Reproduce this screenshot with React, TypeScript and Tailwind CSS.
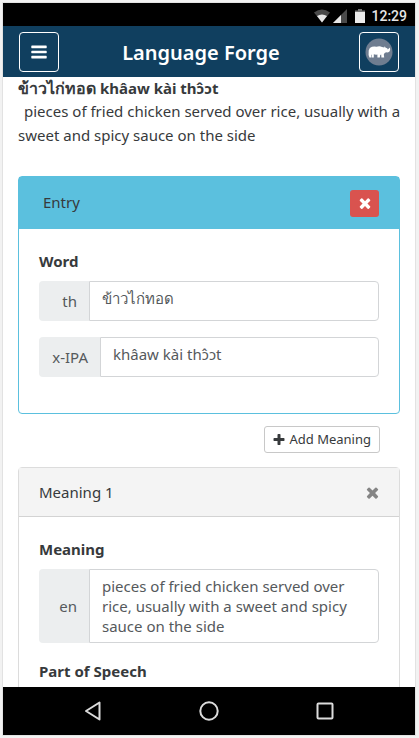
import type { ReactNode } from "react";

const ICONS = {
  bars: "M1664 1344v128q0 26-19 45t-45 19h-1408q-26 0-45-19t-19-45v-128q0-26 19-45t45-19h1408q26 0 45 19t19 45zm0-512v128q0 26-19 45t-45 19h-1408q-26 0-45-19t-19-45v-128q0-26 19-45t45-19h1408q26 0 45 19t19 45zm0-512v128q0 26-19 45t-45 19h-1408q-26 0-45-19t-19-45v-128q0-26 19-45t45-19h1408q26 0 45 19t19 45z",
  times: "M1490 1322q0 40-28 68l-136 136q-28 28-68 28t-68-28l-294-294-294 294q-28 28-68 28t-68-28l-136-136q-28-28-28-68t28-68l294-294-294-294q-28-28-28-68t28-68l136-136q28-28 68-28t68 28l294 294 294-294q28-28 68-28t68 28l136 136q28 28 28 68t-28 68l-294 294 294 294q28 28 28 68z",
  plus: "M1600 736v192q0 40-28 68t-68 28h-416v416q0 40-28 68t-68 28h-192q-40 0-68-28t-28-68v-416h-416q-40 0-68-28t-28-68v-192q0-40 28-68t68-28h416v-416q0-40 28-68t68-28h192q40 0 68 28t28 68v416h416q40 0 68 28t28 68z",
};

function Icon({ name, size }: { name: keyof typeof ICONS; size: number }) {
  return (
    <svg width={size} height={size} viewBox="0 0 1792 1792" fill="currentColor" aria-hidden="true">
      <path d={ICONS[name]} />
    </svg>
  );
}

function StatusBar() {
  return (
    <div className="flex h-[23px] shrink-0 items-center justify-end bg-black pt-0.5 pr-2 text-[#e6e6e6]">
      <svg width="18" height="14" viewBox="0 0 18 14" aria-hidden="true">
        <path d="M1 3.5Q9-2.5 17 3.5L9 13.5Z" fill="#4a4a4a" />
        <path d="M4 7Q9 3.8 14 7L9 13.5Z" fill="#e8e8e8" />
      </svg>
      <svg className="ml-0.5" width="14" height="14" viewBox="0 0 14 14" aria-hidden="true">
        <path d="M14 0V14H0Z" fill="#4a4a4a" />
        <path d="M8 6V14H0Z" fill="#e8e8e8" />
      </svg>
      <svg className="ml-2" width="10" height="14" viewBox="0 0 10 14" aria-hidden="true">
        <path d="M3 0H7V1.5H10V3H0V1.5H3Z" fill="#777" />
        <path d="M0 3H10V14H0Z" fill="#ececec" />
      </svg>
      <span className="ml-1.5 font-[Roboto,sans-serif] text-sm font-medium">12:29</span>
    </div>
  );
}

function Rhino() {
  return (
    <svg width="28" height="28" viewBox="0 0 28 28" aria-hidden="true">
      <circle cx="14" cy="14" r="13.5" fill="#6f7d90" />
      <path
        d="M4.2 18.800L3.600 17L3.700 12.500Q4.300 9.600 7 8.800Q9.500 8.200 11.500 8.800Q14.500 7.900 17 8.900L19.200 9.400L19.800 8.200L20.600 9.700L22.200 10.200L22.800 11.400L25 9.600Q25.600 12 24.300 13.700Q23 14.700 21.200 14.300Q19.300 14.800 18.800 16.500L19.200 19.600H16.400L16.200 16.500L15.200 16.900L14.800 19.600H12.400L12.400 16.600Q10.500 17 8.800 16.300L8.800 19.600H6.800L6.600 17L6 16.400L6.300 19.600H4.400Z"
        fill="#fff"
      />
    </svg>
  );
}

function Navbar() {
  return (
    <header className="flex h-[51px] shrink-0 items-center justify-between bg-[#103f5f] px-4 text-white">
      <button
        type="button"
        aria-label="Menu"
        className="flex size-10 items-center justify-center rounded border border-white"
      >
        <Icon name="bars" size={18} />
      </button>
      <h1 className="pt-0.5 pr-4 text-xl font-semibold">Language Forge</h1>
      <button
        type="button"
        aria-label="Account"
        className="flex size-10 items-center justify-center rounded border border-white"
      >
        <Rhino />
      </button>
    </header>
  );
}

function Field({ id, tag, value, rows = 1, wide = false }: {
  id: string;
  tag: string;
  value: string;
  rows?: number;
  wide?: boolean;
}) {
  return (
    <div className="flex">
      <label
        htmlFor={id}
        className={`flex shrink-0 items-center justify-end rounded-l bg-[#eceeef] pr-3 text-[#55595c] ${wide ? "w-[61px]" : "w-[50px]"}`}
      >
        {tag}
      </label>
      <textarea
        id={id}
        rows={rows}
        defaultValue={value}
        className={`block min-w-0 flex-1 resize-none overflow-hidden rounded-r border border-[#d3d5d7] bg-white px-3 py-1.5 leading-5 text-[#55595c] outline-none ${rows > 1 ? "" : "h-10"}`}
      />
    </div>
  );
}

function FieldLabel({ children }: { children: ReactNode }) {
  return <h2 className="leading-6 font-bold">{children}</h2>;
}

function EntryCard() {
  return (
    <section className="mt-[29px] rounded border border-[#5bc0de] pb-9">
      <div className="flex h-[52px] items-center justify-between bg-[#5bc0de] pr-5 pl-6">
        <span className="pb-0.5">Entry</span>
        <button
          type="button"
          aria-label="Close entry"
          className="flex h-[27px] w-[29px] items-center justify-center rounded-[3px] bg-[#d9534f] text-white"
        >
          <Icon name="times" size={16} />
        </button>
      </div>
      <div className="px-5 pt-5">
        <FieldLabel>Word</FieldLabel>
        <div className="mt-2 flex flex-col gap-4">
          <Field id="word-th" tag="th" value="ข้าวไก่ทอด" />
          <Field id="word-ipa" tag="x-IPA" value="khâaw kài thɔ̂ɔt" wide />
        </div>
      </div>
    </section>
  );
}

function MeaningCard() {
  return (
    <section className="mt-3.5 rounded border border-[#dcdcdc]">
      <div className="flex h-[49px] items-center justify-between border-b border-[#d3d3d3] bg-[#f4f4f4] pr-[18px] pl-5">
        <span>Meaning 1</span>
        <button type="button" aria-label="Remove meaning" className="text-[#858585]">
          <Icon name="times" size={17} />
        </button>
      </div>
      <div className="px-5 pt-5 pb-5">
        <FieldLabel>Meaning</FieldLabel>
        <div className="mt-2">
          <Field
            id="meaning-en"
            tag="en"
            rows={3}
            value="pieces of fried chicken served over rice, usually with a sweet and spicy sauce on the side"
          />
        </div>
        <div className="mt-4">
          <FieldLabel>Part of Speech</FieldLabel>
        </div>
      </div>
    </section>
  );
}

function SystemNav() {
  return (
    <nav className="flex h-12 shrink-0 items-center justify-center gap-[88px] bg-black">
      <button type="button" aria-label="Back">
        <svg width="28" height="28" viewBox="0 0 28 28" fill="none" stroke="#dcdcdc" strokeWidth="2">
          <path d="M20.500 5.500V22.500L7 14Z" strokeLinejoin="round" />
        </svg>
      </button>
      <button type="button" aria-label="Home">
        <svg width="28" height="28" viewBox="0 0 28 28" fill="none" stroke="#dcdcdc" strokeWidth="2">
          <circle cx="14" cy="14" r="8.700" />
        </svg>
      </button>
      <button type="button" aria-label="Recent apps">
        <svg width="28" height="28" viewBox="0 0 28 28" fill="none" stroke="#dcdcdc" strokeWidth="2">
          <rect x="6.500" y="6.500" width="15" height="15" rx="1" />
        </svg>
      </button>
    </nav>
  );
}

export default function App() {
  return (
    <div className="h-screen bg-[#f2f2f2] pt-[3px] pr-1 pb-[3px] pl-[3px] font-['Noto_Sans','Open_Sans',sans-serif] text-[15px] text-[#373a3c]">
      <div className="flex h-full flex-col bg-white outline outline-[#e2e2e2]">
        <StatusBar />
        <Navbar />
        <main className="min-h-0 flex-1 overflow-y-auto px-[15px] [scrollbar-width:none]">
          <p className="h-[22px] leading-[22px] font-bold">
            <span className="text-base leading-[22px]">ข้าวไก่ทอด</span> khâaw kài thɔ̂ɔt
          </p>
          <p className="-mr-2 leading-6 indent-1.5">
            pieces of fried chicken served over rice, usually with a sweet and spicy sauce on the side
          </p>
          <EntryCard />
          <div className="mt-3 flex justify-end pr-5">
            <button
              type="button"
              className="flex h-[27px] items-center gap-[3px] rounded-[3px] border border-[#c8c8c8] pr-2 pl-[7px] text-[13px]"
            >
              <Icon name="plus" size={14} />
              Add Meaning
            </button>
          </div>
          <MeaningCard />
        </main>
        <SystemNav />
      </div>
    </div>
  );
}
